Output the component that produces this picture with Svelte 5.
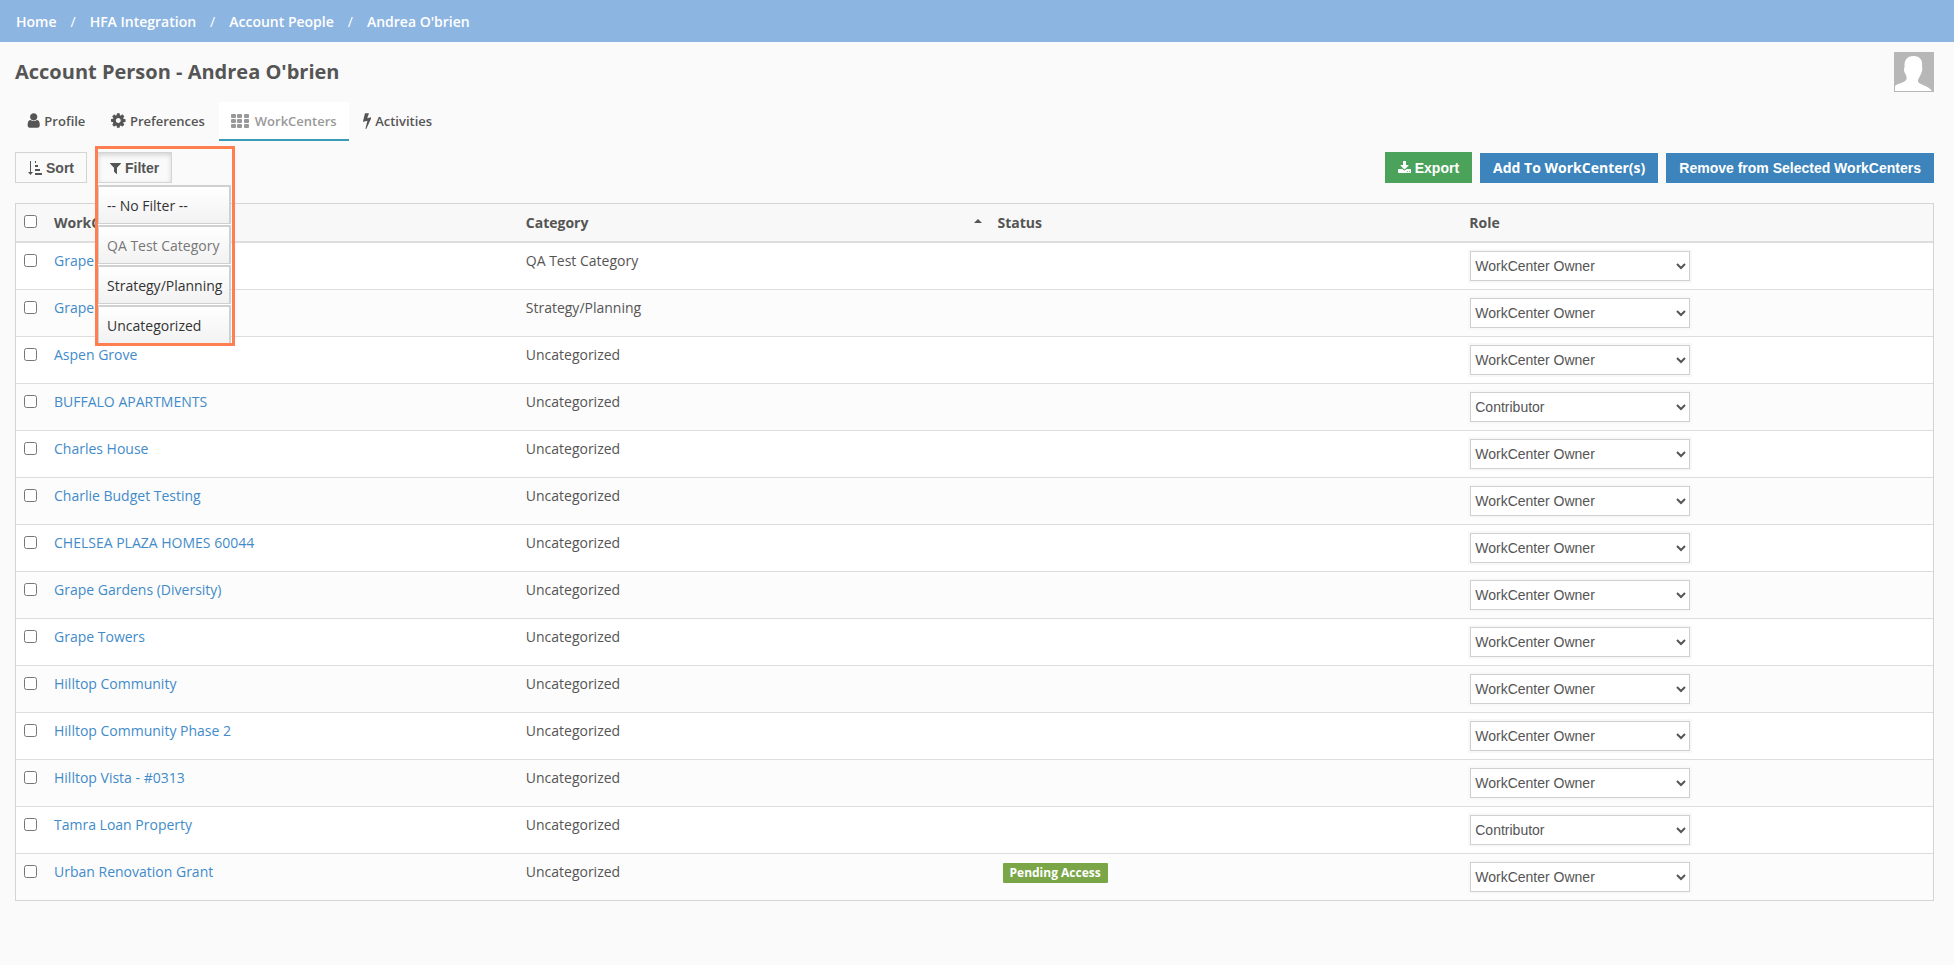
<script>
  const crumbs = ["Home", "HFA Integration", "Account People", "Andrea O'brien"];
  const filters = ['-- No Filter --', 'QA Test Category', 'Strategy/Planning', 'Uncategorized'];
  const rows = [
    { name: 'Grape', category: 'QA Test Category', role: 'WorkCenter Owner' },
    { name: 'Grape', category: 'Strategy/Planning', role: 'WorkCenter Owner' },
    { name: 'Aspen Grove', category: 'Uncategorized', role: 'WorkCenter Owner' },
    { name: 'BUFFALO APARTMENTS', category: 'Uncategorized', role: 'Contributor' },
    { name: 'Charles House', category: 'Uncategorized', role: 'WorkCenter Owner' },
    { name: 'Charlie Budget Testing', category: 'Uncategorized', role: 'WorkCenter Owner' },
    { name: 'CHELSEA PLAZA HOMES 60044', category: 'Uncategorized', role: 'WorkCenter Owner' },
    { name: 'Grape Gardens (Diversity)', category: 'Uncategorized', role: 'WorkCenter Owner' },
    { name: 'Grape Towers', category: 'Uncategorized', role: 'WorkCenter Owner' },
    { name: 'Hilltop Community', category: 'Uncategorized', role: 'WorkCenter Owner' },
    { name: 'Hilltop Community Phase 2', category: 'Uncategorized', role: 'WorkCenter Owner' },
    { name: 'Hilltop Vista - #0313', category: 'Uncategorized', role: 'WorkCenter Owner' },
    { name: 'Tamra Loan Property', category: 'Uncategorized', role: 'Contributor' },
    { name: 'Urban Renovation Grant', category: 'Uncategorized', role: 'WorkCenter Owner', status: 'Pending Access' }
  ];
  const icons = {
    user: 'M1536 1399q0 109-62.5 187t-150.5 78h-854q-88 0-150.5-78t-62.5-187q0-85 8.5-160.5t31.5-152 58.5-131 94-89 134.5-34.5q131 128 313 128t313-128q76 0 134.5 34.5t94 89 58.5 131 31.5 152 8.5 160.5zm-256-887q0 159-112.5 271.5t-271.5 112.5-271.5-112.5-112.5-271.5 112.5-271.5 271.5-112.5 271.5 112.5 112.5 271.5z',
    cog: 'M1152 896q0-106-75-181t-181-75-181 75-75 181 75 181 181 75 181-75 75-181zm512-109v222q0 12-8 23t-20 13l-185 28q-19 54-39 91 35 50 107 138 10 12 10 25t-9 23q-27 37-99 108t-94 71q-12 0-26-9l-138-108q-44 23-91 38-16 136-29 186-7 28-36 28h-222q-14 0-24.5-8.5t-11.5-21.5l-28-184q-49-16-90-37l-141 107q-10 9-25 9-14 0-25-11-126-114-165-168-7-10-7-23 0-12 8-23 15-21 51-66.5t54-70.5q-27-50-41-99l-183-27q-13-2-21-12.5t-8-23.5v-222q0-12 8-23t19-13l186-28q14-46 39-92-40-57-107-138-10-12-10-24 0-10 9-23 26-36 98.5-107.5t94.5-71.5q13 0 26 10l138 107q44-23 91-38 16-136 29-186 7-28 36-28h222q14 0 24.5 8.5t11.5 21.5l28 184q49 16 90 37l142-107q9-9 24-9 13 0 25 10 129 119 165 170 7 8 7 22 0 12-8 23-15 21-51 66.5t-54 70.5q26 50 41 98l183 28q13 2 21 12.5t8 23.5z',
    bolt: 'M1333 566q18 20 7 44l-540 1157q-13 25-42 25-4 0-14-2-17-5-25.5-19t-4.5-30l197-808-406 101q-4 1-12 1-18 0-31-11-18-15-13-39l201-825q4-14 16-23t28-9h328q19 0 32 12.5t13 29.5q0 8-5 18l-171 463 396-98q8-2 12-2 19 0 34 15z',
    filter: 'M1595 295q17 41-14 70l-493 493v742q0 42-39 59-13 5-25 5-27 0-45-19l-256-256q-19-19-19-45v-486l-493-493q-31-29-14-70 17-39 59-39h1280q42 0 59 39z',
    download: 'M1344 1344q0-26-19-45t-45-19-45 19-19 45 19 45 45 19 45-19 19-45zm256 0q0-26-19-45t-45-19-45 19-19 45 19 45 45 19 45-19 19-45zm128-224v320q0 40-28 68t-68 28h-1472q-40 0-68-28t-28-68v-320q0-40 28-68t68-28h465l135 136q58 56 136 56t136-56l136-136h464q40 0 68 28t28 68zm-325-569q17 41-14 70l-448 448q-18 19-45 19t-45-19l-448-448q-31-29-14-70 17-39 59-39h256v-448q0-26 19-45t45-19h256q26 0 45 19t19 45v448h256q42 0 59 39z'
  };
</script>

<nav class="crumbs" aria-label="Breadcrumb">
  {#each crumbs as crumb, i}
    {#if i > 0}<span class="slash">/</span>{/if}
    <a href="#top">{crumb}</a>
  {/each}
</nav>

<main>
  <header>
    <h1>Account Person - Andrea O'brien</h1>
    <svg class="avatar" viewBox="0 0 40 40" role="img" aria-label="Avatar">
      <rect width="40" height="40" fill="#b7b7b7" />
      <path fill="#fff" d="M1 39v-5c3-3 8-3 10-5 2-1 2-3 1-6-1-2-2-3-2-5 0-1 0-2 .6-3C10 8 13 4 19.500 4S29 8 28 15c1 1 0 3 0 4-1 4-3 6-4 9-.500 2 1 3 3 4 4 2 8 3 11 7z" />
    </svg>
  </header>

  <nav class="tabs" aria-label="Sections">
    <a href="#profile"><svg class="icon big" viewBox="190 0 1408 1792"><path d={icons.user} /></svg>Profile</a>
    <a href="#preferences"><svg class="icon big" viewBox="128 0 1536 1792"><path d={icons.cog} /></svg>Preferences</a>
    <a href="#workcenters" class="active">
      <svg class="grid" viewBox="0 0 18 14">
        {#each [0, 5, 10] as y}
          {#each [0, 6, 13] as x}
            <rect {x} {y} width="5" height="4" rx="1" />
          {/each}
        {/each}
      </svg>WorkCenters</a>
    <a href="#activities"><svg class="icon big" viewBox="448 0 896 1792"><path d={icons.bolt} /></svg>Activities</a>
  </nav>

  <div class="toolbar">
    <button class="plain">
      <svg class="sort" viewBox="0 0 14 14">
        <path d="M2 0h1v11h2L2.500 14 0 11h2zM7 0h1v2H7zM7 4h3v2H7zM7 8h5v2H7zM7 12h7v2H7z" />
      </svg>Sort</button>
    <div class="filter">
      <button class="plain pressed" aria-expanded="true"><svg class="icon" viewBox="192 0 1408 1792"><path d={icons.filter} /></svg>Filter</button>
      <div class="frame">
        <ul>
          {#each filters as item, i}
            <li><a href="#filter" class:current={i === 1}>{item}</a></li>
          {/each}
        </ul>
      </div>
    </div>
    <div class="actions">
      <button class="solid green"><svg class="icon" viewBox="64 0 1664 1792"><path d={icons.download} /></svg>Export</button>
      <a href="#add" class="solid blue">Add To WorkCenter(s)</a>
      <button class="solid blue">Remove from Selected WorkCenters</button>
    </div>
  </div>

  <table>
    <thead>
      <tr>
        <th class="check"><input type="checkbox" aria-label="Select all" /></th>
        <th>WorkCenter</th>
        <th><span class="sorted">Category<i></i></span></th>
        <th>Status</th>
        <th>Role</th>
      </tr>
    </thead>
    <tbody>
      {#each rows as row}
        <tr>
          <td class="check"><input type="checkbox" aria-label={'Select ' + row.name} /></td>
          <td><a href="#workcenter">{row.name}</a></td>
          <td>{row.category}</td>
          <td>{#if row.status}<span class="badge">{row.status}</span>{/if}</td>
          <td class="role">
            <select aria-label={'Role for ' + row.name} value={row.role}>
              <option>WorkCenter Owner</option>
              <option>Contributor</option>
            </select>
          </td>
        </tr>
      {/each}
    </tbody>
  </table>
</main>

<style>
  :global(body) {
    margin: 0;
    background: #fafafa;
    color: #555;
    font: 14px/20px "Open Sans", sans-serif;
  }
  a {
    color: inherit;
    text-decoration: none;
  }
  .crumbs {
    display: flex;
    align-items: center;
    gap: 14px;
    height: 40px;
    padding: 2px 16px 0;
    background: #8db5e1;
    color: #fff;
    font-weight: 600;
  }
  .slash {
    font-weight: 400;
  }
  main {
    padding: 10px 20px 0 15px;
  }
  header {
    display: flex;
    justify-content: space-between;
    height: 40px;
  }
  h1 {
    margin: 0;
    font-size: 20px;
    line-height: 40px;
    font-weight: 700;
  }
  .avatar {
    width: 40px;
    height: 40px;
  }
  .icon {
    height: 14px;
    fill: currentColor;
  }
  .icon.big {
    height: 17px;
  }
  .tabs {
    display: flex;
    gap: 2px;
    margin-top: 10px;
    height: 39px;
    font-size: 13px;
    font-weight: 600;
  }
  .tabs a {
    display: flex;
    align-items: center;
    gap: 4px;
    padding: 0 12px;
    border-bottom: 2px solid transparent;
  }
  .tabs .active {
    gap: 6px;
    background: #fff;
    border-color: #3c9ab9;
    color: #999;
  }
  .grid {
    width: 18px;
    height: 14px;
    fill: currentColor;
  }
  .toolbar {
    display: flex;
    align-items: flex-end;
    gap: 10px;
    margin-top: 11px;
    height: 31px;
  }
  .toolbar button,
  .solid {
    display: flex;
    align-items: center;
    box-sizing: border-box;
    gap: 4px;
    height: 30px;
    padding: 0 12px;
    border: 0;
    font: bold 14px/20px "Liberation Sans", Arial, sans-serif;
    color: #555;
    cursor: pointer;
  }
  .toolbar .plain {
    height: 31px;
    border: 1px solid #d4d4d4;
    background: #fafafa;
  }
  .sort {
    width: 14px;
    height: 14px;
    fill: currentColor;
  }
  .toolbar .pressed {
    box-shadow: inset 0 2px 5px rgba(0, 0, 0, 0.16);
  }
  .filter {
    position: relative;
  }
  .frame {
    position: absolute;
    z-index: 2;
    top: -6px;
    left: -2px;
    box-sizing: border-box;
    width: 140px;
    height: 200px;
    padding-top: 36px;
    border: 3px solid #ff7f50;
    overflow: hidden;
  }
  ul {
    margin: 0;
    padding: 0;
    width: 133px;
    list-style: none;
    background: #fff;
  }
  li {
    box-sizing: border-box;
    height: 40px;
    padding-bottom: 1px;
  }
  li a {
    display: block;
    box-sizing: border-box;
    height: 39px;
    padding: 9px 0 0 8px;
    border: 1px solid #d0d0d0;
    border-top-width: 2px;
    border-right-width: 2px;
    background: linear-gradient(#fff, #f2f2f2);
    color: #333;
    white-space: nowrap;
  }
  li .current {
    color: #777;
  }
  .actions {
    display: flex;
    align-items: flex-end;
    gap: 8px;
    margin-left: auto;
  }
  .toolbar .solid {
    color: #fff;
    padding: 0 13px;
  }
  .toolbar .green {
    height: 31px;
    background: #4ba35b;
  }
  .toolbar .blue {
    background: #3c84bb;
  }
  .toolbar a.solid {
    font-family: "Open Sans", sans-serif;
  }
  table {
    margin-top: 20px;
    width: 100%;
    table-layout: fixed;
    border-collapse: separate;
    border-spacing: 0;
    border: 1px solid #d4d4d4;
  }
  th,
  td {
    box-sizing: border-box;
    padding: 8px;
    text-align: left;
    vertical-align: top;
  }
  th {
    height: 39px;
    padding: 9px 8px 8px;
    border-bottom: 2px solid #ddd;
    background: #f8f8f8;
    font-weight: 700;
  }
  th.check {
    padding-top: 8px;
  }
  td {
    height: 47px;
    border-bottom: 1px solid #ddd;
    background: #fff;
  }
  tr:nth-child(even) td {
    background: #fcfcfc;
  }
  tr:last-child td {
    height: 46px;
    border-bottom: 0;
  }
  .check {
    width: 30px;
  }
  td.role {
    padding-left: 9px;
  }
  input {
    display: block;
    width: 13px;
    height: 13px;
    margin: 3px 0 0;
  }
  td a {
    color: #428bca;
  }
  .sorted {
    display: flex;
    justify-content: space-between;
  }
  .sorted i {
    margin: 6px 0 0;
    width: 0;
    height: 4px;
    box-sizing: border-box;
    border: 4px solid transparent;
    border-top: 0;
    border-bottom-color: #555;
  }
  .badge {
    display: block;
    width: fit-content;
    margin: 1px 0 0 5px;
    padding: 0 7px;
    background: #7aa648;
    border-radius: 1px;
    color: #fff;
    font-size: 12px;
    font-weight: 700;
  }
  select {
    display: block;
    box-sizing: border-box;
    width: 220px;
    height: 30px;
    padding: 0;
    border: 1px solid #d0d0d0;
    border-radius: 0;
    box-shadow: 0 0 0 2px #f8f8f8;
    background: #fff;
    color: #555;
    font: 14px/20px "Liberation Sans", Arial, sans-serif;
  }
</style>
